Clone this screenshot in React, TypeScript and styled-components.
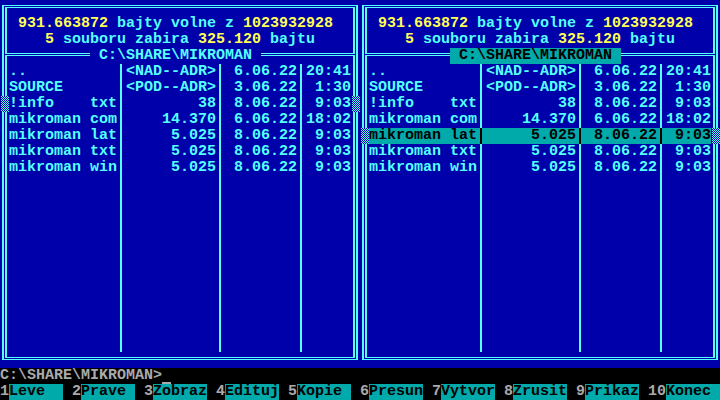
import React from "react";
import styled, { createGlobalStyle } from "styled-components";

const color = {
  blue: "#0000aa",
  cyan: "#55ffff",
  yellow: "#ffff55",
  teal: "#00aaaa",
  gray: "#aaaaaa",
  black: "#000000",
};

const GlobalStyle = createGlobalStyle`
  *, *::before, *::after { box-sizing: border-box; }
  body { margin: 0; background: ${color.black}; }
  body, button, input, table {
    font: bold 15px/16px "Liberation Mono", monospace;
  }
`;

const Screen = styled.div`
  min-height: 100vh;
  display: flex;
  flex-direction: column;
  color: ${color.gray};
`;

const Panels = styled.main`
  flex: 1;
  display: grid;
  grid-template-columns: 1fr 1fr;
  background: ${color.blue};
  color: ${color.cyan};
`;

const Panel = styled.section`
  position: relative;
  display: flex;
  padding: 5px 2px 8px;
`;

const OuterFrame = styled.div`
  flex: 1;
  display: flex;
  border: solid ${color.cyan};
  border-width: 1px 2px;
  padding: 1px;
`;

const InnerFrame = styled.div`
  flex: 1;
  min-width: 0;
  border: solid ${color.cyan};
  border-width: 1px 2px;
  padding-bottom: 5px;
`;

const Summary = styled.header`
  padding: 8px 11px 0;
  white-space: pre;
`;

const SummaryLine = styled.p<{ $indent?: boolean }>`
  margin: 0;
  padding-left: ${(p) => (p.$indent ? 27 : 0)}px;
`;

const Figure = styled.strong`
  color: ${color.yellow};
`;

const TitleRow = styled.div`
  display: grid;
  grid-template-columns: 85px auto 1fr;
  margin: 0 -2px;
`;

const Rule = styled.span`
  height: 3px;
  margin-top: 5px;
  border: solid ${color.cyan};
  border-width: 1px 0;
  background: ${color.blue};
`;

const Title = styled.h2<{ $active: boolean }>`
  margin: 0;
  padding: 0 9px;
  font: inherit;
  color: ${(p) => (p.$active ? color.black : color.cyan)};
  background: ${(p) => (p.$active ? color.teal : color.blue)};
`;

const FileArea = styled.div`
  padding: 0 2px;
`;

const FileTable = styled.table`
  width: 100%;
  table-layout: fixed;
  border-collapse: separate;
  border-spacing: 0;
`;

const Column = styled.col<{ $width?: number }>`
  width: ${(p) => (p.$width ? `${p.$width}px` : "auto")};
`;

const FileRow = styled.tr<{ $selected?: boolean }>`
  height: 16px;
  color: ${(p) => (p.$selected ? color.black : color.cyan)};
  background: ${(p) => (p.$selected ? color.teal : "transparent")};
`;

const Cell = styled.td`
  padding: 0 3px 0 4px;
  border-right: 2px solid currentColor;
  text-align: right;
  white-space: pre;
  &:first-child {
    padding-left: 0;
    text-align: left;
  }
  &:last-child {
    padding-right: 0;
    border-right: 0;
  }
`;

const Thumb = styled.svg<{ $row: number; $side: "left" | "right" }>`
  position: absolute;
  top: ${(p) => p.$row * 16}px;
  ${(p) => (p.$side === "left" ? "left: 0;" : "right: 0;")}
  width: 9px;
  height: 16px;
`;

const CommandLine = styled.label`
  display: flex;
  height: 16px;
`;

const Cursor = styled.span`
  width: 9px;
  height: 2px;
  margin-top: 14px;
  background: ${color.gray};
`;

const CommandInput = styled.input`
  flex: 1;
  min-width: 0;
  height: 16px;
  padding: 0;
  border: 0;
  outline: 0;
  color: inherit;
  background: transparent;
`;

const KeyBar = styled.nav`
  display: grid;
  grid-template-columns: repeat(10, 1fr);
`;

const KeyButton = styled.button`
  display: flex;
  min-width: 0;
  height: 16px;
  padding: 0 9px 0 0;
  border: 0;
  color: ${color.gray};
  background: ${color.black};
  text-align: left;
  &:last-child {
    padding-right: 0;
  }
`;

const KeyLabel = styled.span`
  flex: 1;
  color: ${color.black};
  background: ${color.teal};
`;

const files = [
  ["..", "<NAD--ADR>", "6.06.22", "20:41"],
  ["SOURCE", "<POD--ADR>", "3.06.22", "1:30"],
  ["!info    txt", "38", "8.06.22", "9:03"],
  ["mikroman com", "14.370", "6.06.22", "18:02"],
  ["mikroman lat", "5.025", "8.06.22", "9:03"],
  ["mikroman txt", "5.025", "8.06.22", "9:03"],
  ["mikroman win", "5.025", "8.06.22", "9:03"],
];

const visibleRows = 18;
const emptyRows = Array.from({ length: visibleRows - files.length }, (_, i) => i);

const keys = ["Leve", "Prave", "Zobraz", "Edituj", "Kopie", "Presun", "Vytvor", "Zrusit", "Prikaz", "Konec"];

function ScrollThumb({ row, side }: { row: number; side: "left" | "right" }) {
  const dots: React.ReactNode[] = [];
  for (let y = 0; y < 16; y++) {
    for (let x = 1 + (y % 2); x < 9; x += 2) {
      dots.push(<rect key={`${x}-${y}`} x={x} y={y} width="1" height="1" />);
    }
  }
  return (
    <Thumb $row={row} $side={side} viewBox="0 0 9 16" shapeRendering="crispEdges" aria-hidden="true">
      <rect width="9" height="16" fill={color.blue} />
      <g fill={color.cyan}>{dots}</g>
    </Thumb>
  );
}

function FilePanel({ active = false, selected, thumbRow }: { active?: boolean; selected?: number; thumbRow: number }) {
  return (
    <Panel>
      <OuterFrame>
        <InnerFrame>
          <Summary>
            <SummaryLine>
              <Figure>931.663872</Figure> bajty volne z <Figure>1023932928</Figure>
            </SummaryLine>
            <SummaryLine $indent>
              <Figure>5</Figure> souboru zabira <Figure>325.120</Figure> bajtu
            </SummaryLine>
          </Summary>
          <TitleRow>
            <Rule />
            <Title $active={active}>C:\SHARE\MIKROMAN</Title>
            <Rule />
          </TitleRow>
          <FileArea>
            <FileTable>
              <colgroup>
                <Column $width={113} />
                <Column $width={99} />
                <Column $width={81} />
                <Column />
              </colgroup>
              <tbody>
                {files.map((file, i) => (
                  <FileRow key={file[0]} $selected={i === selected}>
                    {file.map((text, c) => (
                      <Cell key={c}>{text}</Cell>
                    ))}
                  </FileRow>
                ))}
                {emptyRows.map((i) => (
                  <FileRow key={i}>
                    <Cell />
                    <Cell />
                    <Cell />
                    <Cell />
                  </FileRow>
                ))}
              </tbody>
            </FileTable>
          </FileArea>
        </InnerFrame>
      </OuterFrame>
      <ScrollThumb row={thumbRow} side="left" />
      <ScrollThumb row={thumbRow} side="right" />
    </Panel>
  );
}

export default function App() {
  return (
    <>
      <GlobalStyle />
      <Screen>
        <Panels>
          <FilePanel thumbRow={6} />
          <FilePanel active selected={4} thumbRow={8} />
        </Panels>
        <CommandLine>
          C:\SHARE\MIKROMAN&gt;
          <Cursor />
          <CommandInput type="text" />
        </CommandLine>
        <KeyBar>
          {keys.map((label, i) => (
            <KeyButton key={label} type="button">
              {i + 1}
              <KeyLabel>{label}</KeyLabel>
            </KeyButton>
          ))}
        </KeyBar>
      </Screen>
    </>
  );
}
